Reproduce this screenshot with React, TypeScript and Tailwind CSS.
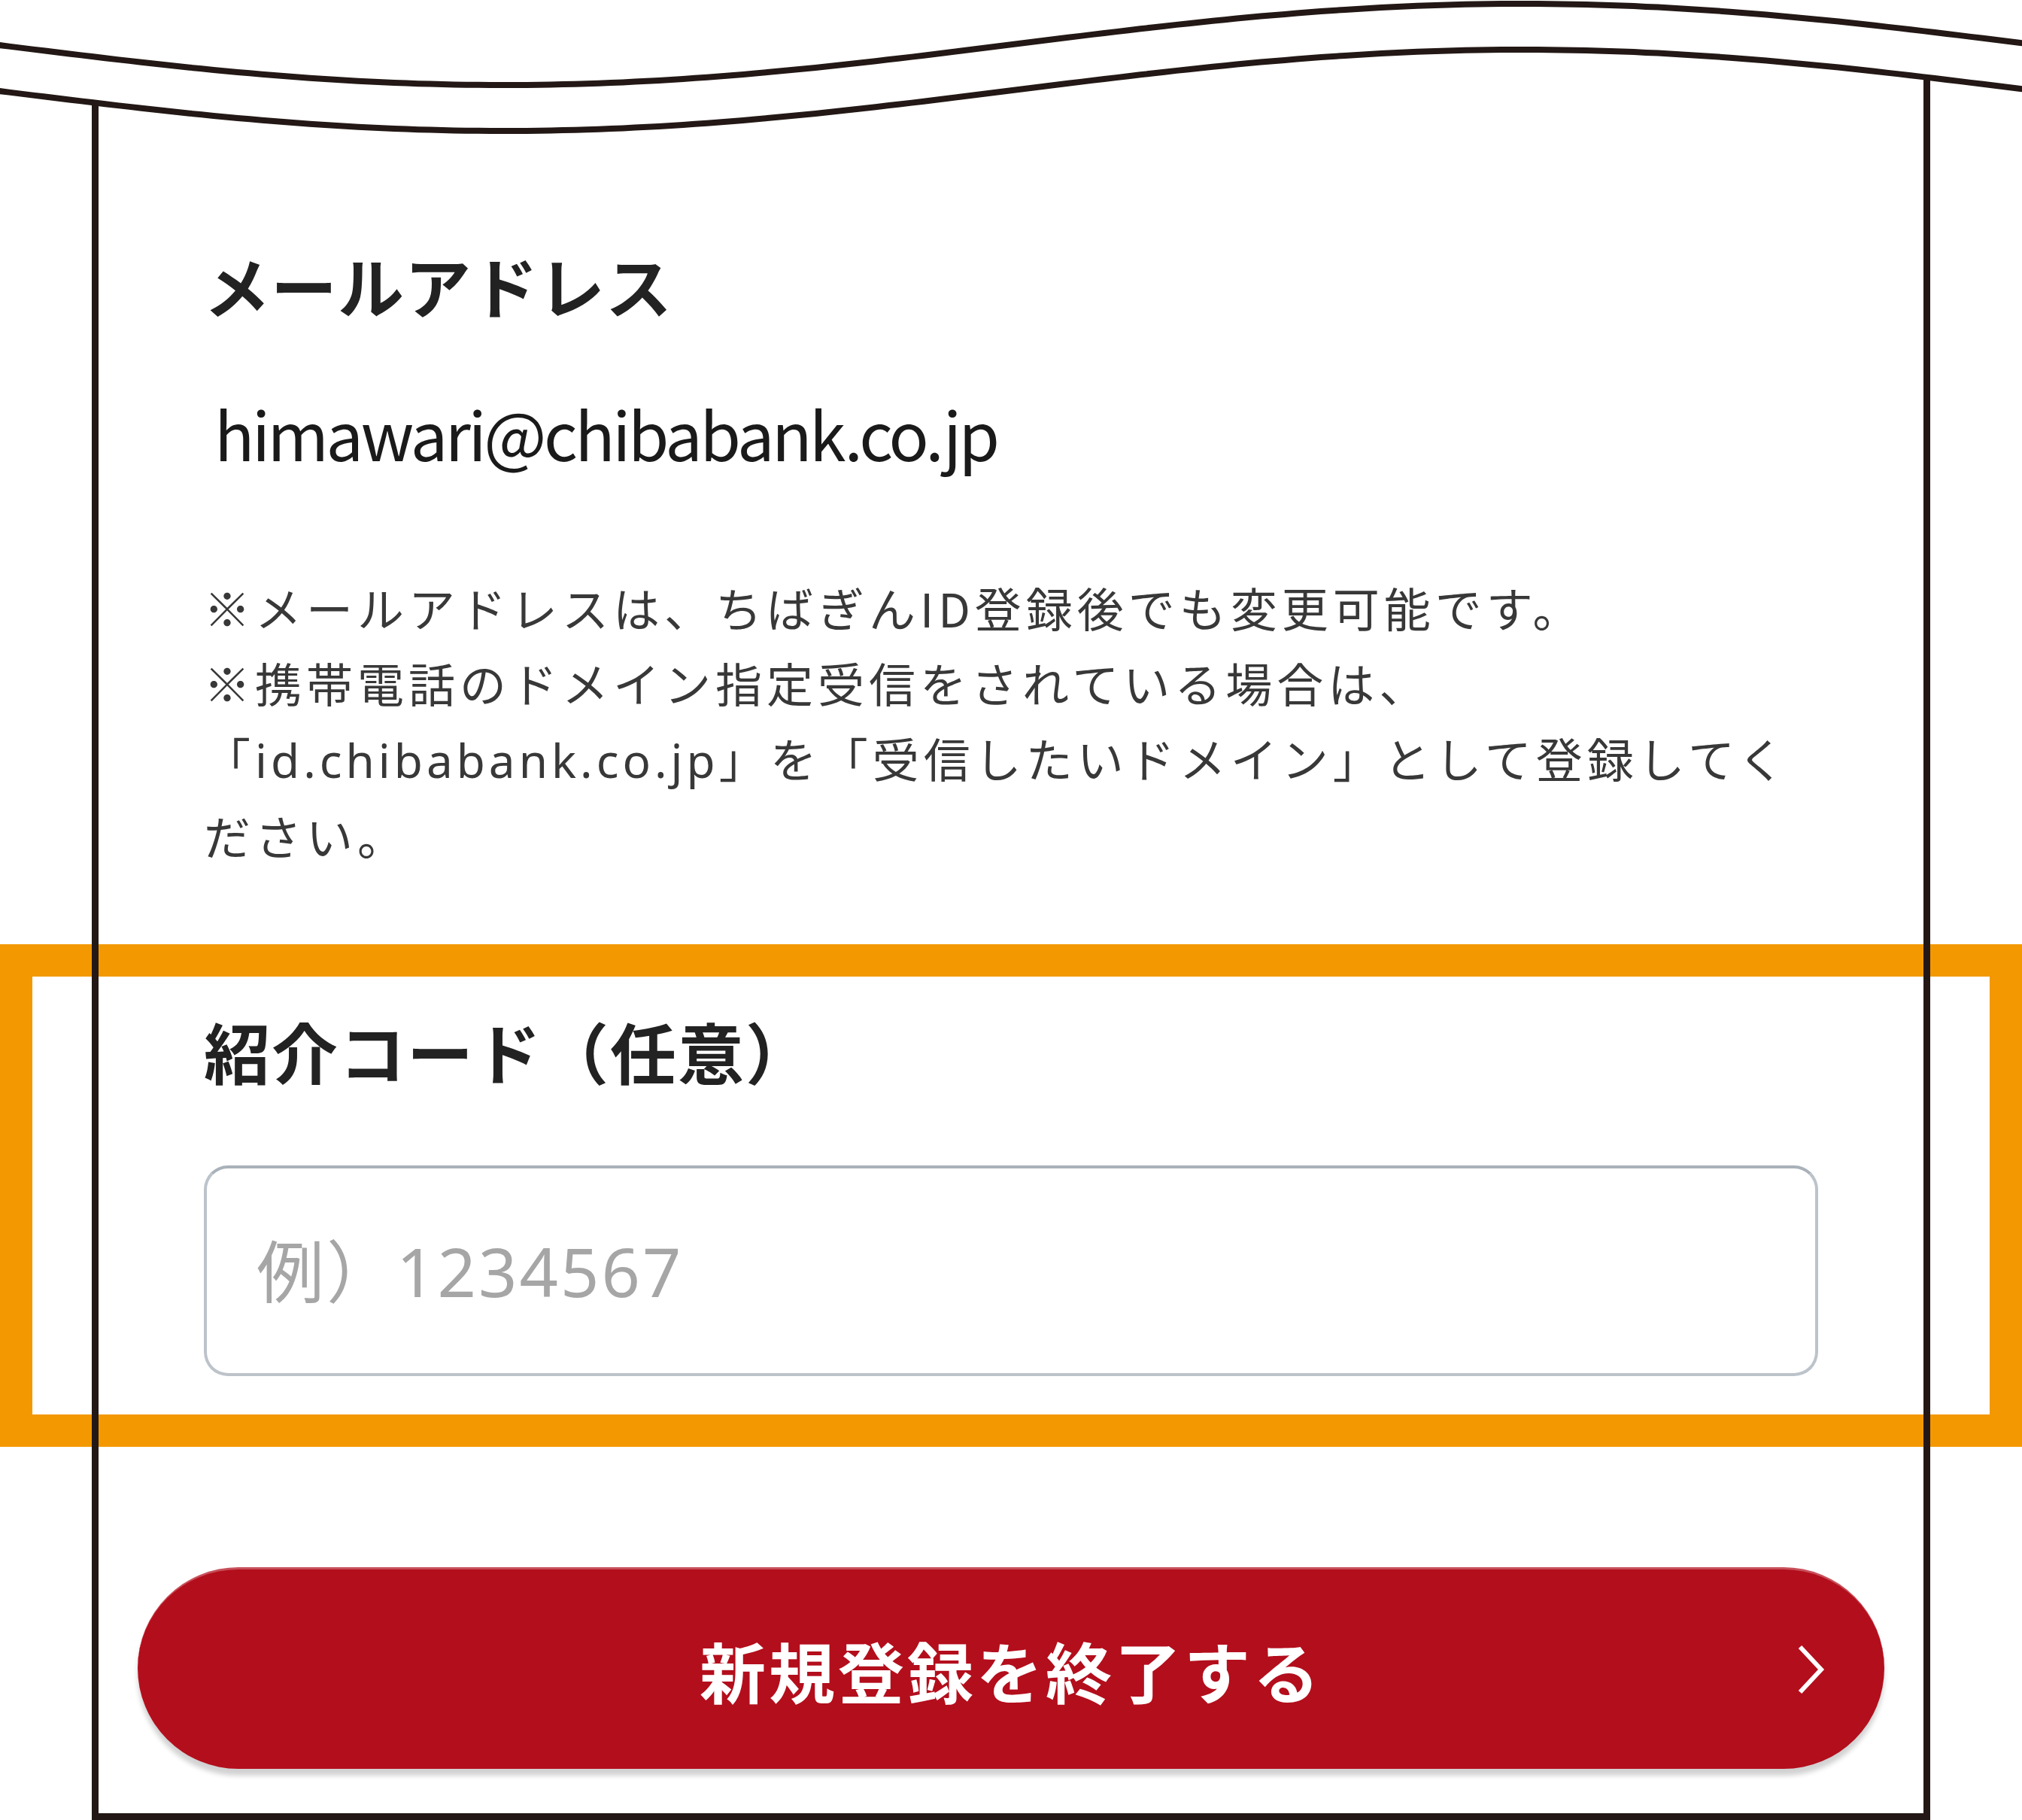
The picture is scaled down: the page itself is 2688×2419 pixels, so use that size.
import React from 'react';

const INK = '#231815';

// wave line across the top of the torn frame
const waveY = (x: number) => 59 + 54 * Math.cos((Math.PI * (x - 669)) / 1355);

const buildLine = (offset: number) => {
  const pts: string[] = [];
  for (let x = -20; x <= 2708; x += 16) {
    pts.push(`${x},${(waveY(x) + offset).toFixed(1)}`);
  }
  return 'M' + pts.join(' L');
};

const buildMask = () => {
  const pts: string[] = [];
  for (let x = 2708; x >= -20; x -= 16) {
    pts.push(`${x},${(waveY(x) + 61).toFixed(1)}`);
  }
  return `M-20,-10 L2708,-10 L${pts.join(' L')} Z`;
};

const Wave: React.FC = () => (
  <svg
    className="absolute top-0 left-0 z-20"
    width={2688}
    height={200}
    viewBox="0 0 2688 200"
    fill="none"
  >
    <path d={buildMask()} fill="#ffffff" />
    <path d={buildLine(0)} stroke={INK} strokeWidth={8} />
    <path d={buildLine(61)} stroke={INK} strokeWidth={8} />
  </svg>
);

const App: React.FC = () => {
  return (
    <div className="relative w-[2688px] h-[2419px] bg-white overflow-hidden font-['Noto_Sans_CJK_JP',sans-serif]">
      {/* orange highlight around the referral code field */}
      <div className="absolute left-0 top-[1255px] w-[2688px] h-[668px] border-[43px] border-[#f39800] z-0" />

      <div className="relative z-10 ml-[122px] w-[2444px] h-full border-x-[9px] border-b-[9px] border-[#231815] px-[140px] pt-[334px]">
        <h2 className="text-[88px] leading-[88px] font-bold tracking-[1px] text-[#222222]">メールアドレス</h2>
        <p className="mt-[109px] ml-[14px] text-[88px] leading-[88px] tracking-[-3.5px] text-[#1a1a1a]">
          himawari@chibabank.co.jp
        </p>

        <div className="mt-[138px] text-[62px] leading-[100px] tracking-[6px] text-[#383838] whitespace-nowrap">
          <p>※メールアドレスは、ちばぎんID登録後でも変更可能です。</p>
          <p>※携帯電話のドメイン指定受信をされている場合は、</p>
          <p>
            「<span className="tracking-[5px] font-['Noto_Sans','Noto_Sans_CJK_JP',sans-serif]">id.chibabank.co.jp</span>」を「受信したいドメイン」として登録してく
          </p>
          <p>ださい。</p>
        </div>

        <h2 className="mt-[192px] text-[88px] leading-[88px] font-bold tracking-[2px] text-[#222222]">紹介コード（任意）</h2>
        <input
          type="text"
          placeholder="例）1234567"
          className="mt-[109px] block w-full h-[280px] rounded-[32px] border-[4px] border-[#bcc3ca] border-t-[#a9b1b9] bg-white px-[66px] text-[90px] tracking-[3px] font-['Noto_Sans','Noto_Sans_CJK_JP',sans-serif] text-[#333333] placeholder:text-[#a6a6a6] outline-none"
        />

        <button
          type="button"
          className="relative mt-[254px] -mx-[88px] w-[2322px] h-[268px] rounded-full bg-[#b30e1c] border-t-[3px] border-[#c7505a] shadow-[0_9px_6px_rgba(0,0,0,0.18)] flex items-center justify-center text-white text-[88px] leading-none font-bold tracking-[4px]"
        >
          新規登録を終了する
          <svg
            className="absolute right-[78px] top-1/2 -translate-y-1/2"
            width={38}
            height={66}
            viewBox="0 0 38 66"
            fill="none"
          >
            <polyline points="4,3 32,33 4,63" stroke="#ffffff" strokeWidth={6} />
          </svg>
        </button>
      </div>

      <Wave />
    </div>
  );
};

export default App;
